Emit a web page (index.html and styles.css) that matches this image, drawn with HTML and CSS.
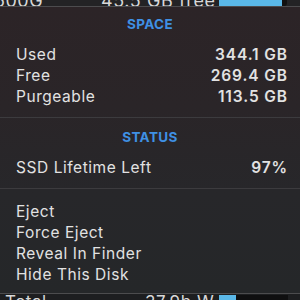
FILE: index.html
```html
<!DOCTYPE html>
<html>
<head>
<meta charset="utf-8">
<link rel="stylesheet" href="styles.css">
</head>
<body>
<div class="behind behind-top">
  <span class="bt-name">500G</span>
  <span class="bt-free">45.5 GB free</span>
  <div class="bar"><div class="bar-fill" style="width:92%"></div></div>
</div>
<div class="menu">
  <div class="header">SPACE</div>
  <div class="group">
    <div class="row"><span>Used</span><span class="val">344.1 GB</span></div>
    <div class="row"><span>Free</span><span class="val">269.4 GB</span></div>
    <div class="row"><span>Purgeable</span><span class="val">113.5 GB</span></div>
  </div>
  <div class="sep"></div>
  <div class="header">STATUS</div>
  <div class="group">
    <div class="row"><span>SSD Lifetime Left</span><span class="val">97%</span></div>
  </div>
  <div class="sep"></div>
  <div class="group actions">
    <div class="row"><span>Eject</span></div>
    <div class="row"><span>Force Eject</span></div>
    <div class="row"><span>Reveal In Finder</span></div>
    <div class="row"><span>Hide This Disk</span></div>
  </div>
</div>
<div class="behind behind-bottom">
  <span class="bb-name">Total</span>
  <span class="bb-val">37.9b W</span>
  <div class="bar"><div class="bar-fill" style="width:25%"></div></div>
</div>
</body>
</html>
```
FILE: styles.css
```css
html, body {
  margin: 0;
  padding: 0;
  width: 300px;
  height: 300px;
  overflow: hidden;
  background: #1f1f21;
  font-family: Inter, "Noto Sans", sans-serif;
  color: #e2e2e2;
}
.behind {
  display: flex;
  overflow: hidden;
  color: #d8d8d8;
  background: #232325;
}
.behind-top {
  height: 6px;
  align-items: flex-end;
  font-size: 18px;
}
.behind-top .bt-name { width: 107px; margin-left: -6px; line-height: 10px; letter-spacing: 0.5px; }
.behind-top .bt-free { width: 118px; line-height: 10px; letter-spacing: 0.6px; }
.behind-top .bar {
  width: 68px;
  height: 10px;
  align-self: flex-end;
  background: #111;
  border-radius: 0 0 3px 0;
}
.bar-fill { height: 100%; background: #5ab8e8; }
.behind-bottom {
  height: 6px;
  align-items: flex-start;
  font-size: 17px;
  line-height: 16px;
  background: #1d1e20;
}
.bb-name { width: 140px; padding-left: 5px; letter-spacing: 0.5px; }
.bb-val { width: 74px; letter-spacing: 0.6px; }
.behind-bottom .bar {
  width: 69px;
  height: 6px;
  margin-top: 1px;
  background: #0f0f10;
}
.menu {
  height: 288px;
  box-sizing: border-box;
  border-top: 1px solid #4c4c4e;
  border-bottom: 1px solid #4c4c4e;
  background: linear-gradient(180deg, #2c2427 0%, #2a2528 35%, #27272a 65%, #252729 100%);
  padding-top: 7px;
}
.header {
  text-align: center;
  color: #3f90e4;
  font-weight: 700;
  font-size: 13.5px;
  line-height: 20px;
  letter-spacing: 0.4px;
}
.sep + .header { margin-top: 9px; }
.group { padding: 10px 0; }
.group.actions { padding-top: 12px; }
.row {
  display: flex;
  justify-content: space-between;
  padding: 0 12px 0 16px;
  font-size: 15.5px;
  line-height: 21px;
  letter-spacing: 0.55px;
}
.val { font-weight: 600; letter-spacing: 0.9px; }
.sep {
  height: 1px;
  background: #3c3b3e;
}
```
